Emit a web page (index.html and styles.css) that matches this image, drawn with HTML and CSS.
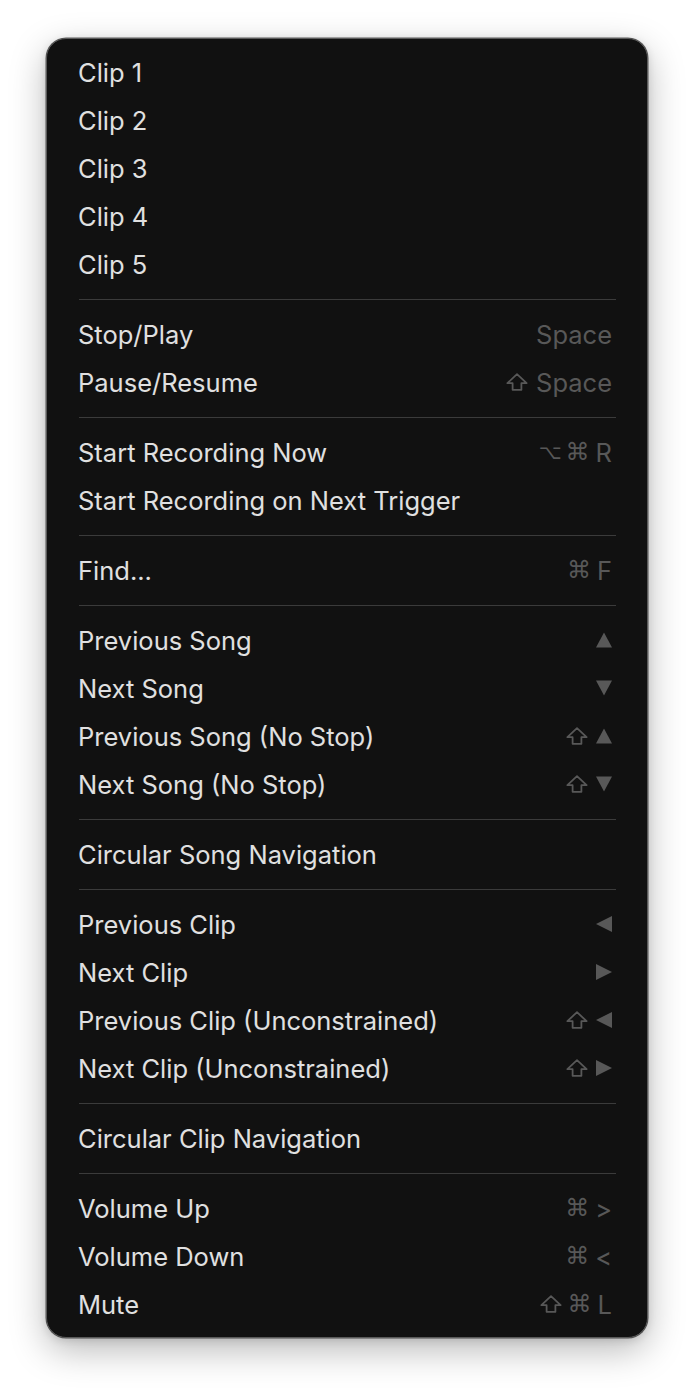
FILE: index.html
```html
<!DOCTYPE html>
<html>
<head>
<meta charset="utf-8">
<link rel="stylesheet" href="styles.css">
</head>
<body>
<svg width="0" height="0" class="defs">
  <defs>
    <symbol id="shift" viewBox="0 0 22 18"><path d="M11 1.2 L20.6 10.2 H15.4 V16.8 H6.6 V10.2 H1.4 Z" fill="none" stroke="currentColor" stroke-width="1.8" stroke-linejoin="round"/></symbol>
    <symbol id="up" viewBox="0 0 16 16"><path d="M8 0.5 L16 15.5 H0 Z" fill="currentColor"/></symbol>
    <symbol id="down" viewBox="0 0 16 16"><path d="M0 0.5 H16 L8 15.5 Z" fill="currentColor"/></symbol>
    <symbol id="left" viewBox="0 0 16 16"><path d="M0 8 L16 0 V16 Z" fill="currentColor"/></symbol>
    <symbol id="right" viewBox="0 0 16 16"><path d="M0 0 L16 8 L0 16 Z" fill="currentColor"/></symbol>
  </defs>
</svg>
<div class="menu">
  <div class="item"><span class="label">Clip 1</span></div>
  <div class="item"><span class="label">Clip 2</span></div>
  <div class="item"><span class="label">Clip 3</span></div>
  <div class="item"><span class="label">Clip 4</span></div>
  <div class="item"><span class="label">Clip 5</span></div>
  <div class="sep"></div>
  <div class="item"><span class="label">Stop/Play</span><span class="keys"><span class="k">Space</span></span></div>
  <div class="item"><span class="label">Pause/Resume</span><span class="keys"><svg class="ic sh"><use href="#shift"/></svg><span class="k">Space</span></span></div>
  <div class="sep"></div>
  <div class="item"><span class="label">Start Recording Now</span><span class="keys"><span class="sym opt">⌥</span><span class="sym">⌘</span><span class="k">R</span></span></div>
  <div class="item"><span class="label">Start Recording on Next Trigger</span></div>
  <div class="sep"></div>
  <div class="item"><span class="label">Find...</span><span class="keys"><span class="sym">⌘</span><span class="k">F</span></span></div>
  <div class="sep"></div>
  <div class="item"><span class="label">Previous Song</span><span class="keys"><svg class="ic tri"><use href="#up"/></svg></span></div>
  <div class="item"><span class="label">Next Song</span><span class="keys"><svg class="ic tri"><use href="#down"/></svg></span></div>
  <div class="item"><span class="label">Previous Song (No Stop)</span><span class="keys"><svg class="ic sh"><use href="#shift"/></svg><svg class="ic tri"><use href="#up"/></svg></span></div>
  <div class="item"><span class="label">Next Song (No Stop)</span><span class="keys"><svg class="ic sh"><use href="#shift"/></svg><svg class="ic tri"><use href="#down"/></svg></span></div>
  <div class="sep"></div>
  <div class="item"><span class="label">Circular Song Navigation</span></div>
  <div class="sep"></div>
  <div class="item"><span class="label">Previous Clip</span><span class="keys"><svg class="ic tri"><use href="#left"/></svg></span></div>
  <div class="item"><span class="label">Next Clip</span><span class="keys"><svg class="ic tri"><use href="#right"/></svg></span></div>
  <div class="item"><span class="label">Previous Clip (Unconstrained)</span><span class="keys"><svg class="ic sh"><use href="#shift"/></svg><svg class="ic tri"><use href="#left"/></svg></span></div>
  <div class="item"><span class="label">Next Clip (Unconstrained)</span><span class="keys"><svg class="ic sh"><use href="#shift"/></svg><svg class="ic tri"><use href="#right"/></svg></span></div>
  <div class="sep"></div>
  <div class="item"><span class="label">Circular Clip Navigation</span></div>
  <div class="sep"></div>
  <div class="item"><span class="label">Volume Up</span><span class="keys"><span class="sym">⌘</span><span class="k">&gt;</span></span></div>
  <div class="item"><span class="label">Volume Down</span><span class="keys"><span class="sym">⌘</span><span class="k">&lt;</span></span></div>
  <div class="item"><span class="label">Mute</span><span class="keys"><svg class="ic sh"><use href="#shift"/></svg><span class="sym">⌘</span><span class="k">L</span></span></div>
</div>
</body>
</html>
```
FILE: styles.css
```css
html, body {
  margin: 0;
  padding: 0;
  background: #ffffff;
}
body {
  width: 694px;
  height: 1392px;
  overflow: hidden;
}
.defs {
  position: absolute;
  width: 0;
  height: 0;
}
.menu {
  margin: 38px 0 0 46px;
  width: 600px;
  background: #111111;
  border: 1px solid #5a5a5a;
  border-radius: 20px;
  padding: 10px 0 8px 0;
  box-shadow: 0 0 0 0.5px rgba(0,0,0,0.6), 0 12px 36px rgba(0,0,0,0.28), 0 2px 8px rgba(0,0,0,0.12);
  font-family: Inter, "Liberation Sans", sans-serif;
  font-size: 25.5px;
  color: #e0e0e0;
}
.item {
  box-sizing: border-box;
  height: 48px;
  display: flex;
  align-items: center;
  justify-content: space-between;
  padding: 0 35px 2px 31px;
}
.label {
  white-space: nowrap;
}
.keys {
  display: flex;
  align-items: center;
  gap: 8px;
  color: #585858;
}
.k {
  font-family: Inter, "Liberation Sans", sans-serif;
}
.sym {
  font-family: "DejaVu Sans", sans-serif;
  font-size: 24px;
  width: 20px;
  display: flex;
  justify-content: center;
}
.sym.opt {
  font-size: 20px;
  width: 19px;
}
.ic {
  display: block;
}
.sh {
  width: 22px;
  height: 18px;
}
.tri {
  width: 16px;
  height: 16px;
}
.sep {
  height: 1px;
  background: #3b3b3b;
  margin: 10px 31px 11px 32px;
}
```
